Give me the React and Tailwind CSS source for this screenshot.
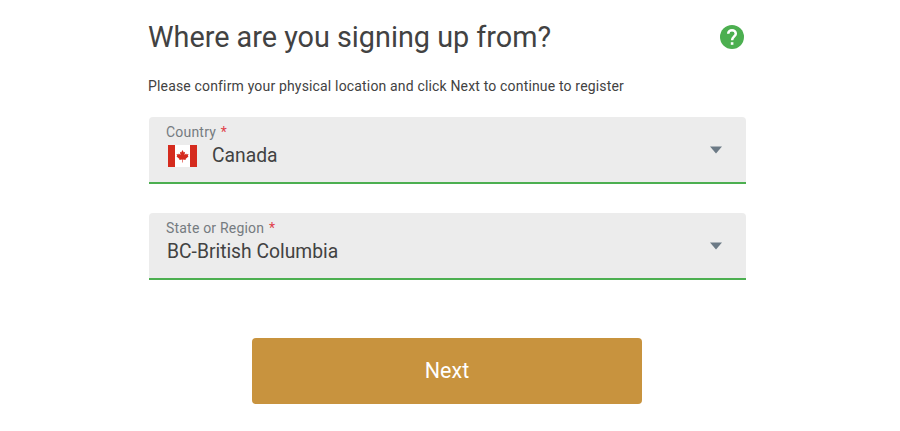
import React from "react";

function Arrow() {
  return (
    <svg className="mr-6 shrink-0" width="12" height="8" viewBox="0 0 12 8">
      <path d="M0 0.5h12L6 7.5z" fill="#6c7a86" />
    </svg>
  );
}

function CanadaFlag() {
  return (
    <svg className="ml-px mr-[15px] shrink-0" width="29" height="22" viewBox="0 0 29 22">
      <path fill="#fff" d="M0 0h29v22H0z" />
      <path fill="#d52b1e" d="M0 0h7v22H0zM22 0h7v22h-7z" />
      <path
        fill="#d52b1e"
        d="M14.5 5l-1.3 2.4-1.3-.6.6 3.3-1.7-1.7-.4 1-1.9-.3.7 2-.7.5 3 2.4-.3 1 3-.5v3h.6v-3l3 .5-.3-1 3-2.4-.7-.5.7-2-1.9.3-.4-1-1.7 1.7.6-3.3-1.3.6z"
      />
    </svg>
  );
}

function Field({ label, children }) {
  return (
    <div className="flex h-[67px] items-center justify-between rounded-t-[4px] border-b-2 border-[#4caf50] bg-[#ececec] pl-[18px]">
      <div className="h-full pt-[7px]">
        <div className="-ml-px text-[14px] leading-4 tracking-[0.2px] text-[#757b80]">
          {label} <span className="ml-px text-[#e0404a]">*</span>
        </div>
        <div className="mt-[5px] flex h-[22px] items-center text-[19.3px] leading-[22px] text-[#424242]">
          {children}
        </div>
      </div>
      <Arrow />
    </div>
  );
}

export default function App() {
  return (
    <main className="h-[431px] w-[900px] bg-white pl-[149px] pt-[20px] font-['Roboto',sans-serif]">
      <div className="w-[597px]">
        <header className="flex h-[34px] items-center justify-between">
          <h1 className="-ml-px text-[28.8px] leading-[34px] text-[#424242]">Where are you signing up from?</h1>
          <svg className="mr-[2px]" width="24" height="24" viewBox="0 0 24 24">
            <circle cx="12" cy="12" r="12" fill="#4caf50" />
            <path
              fill="none"
              stroke="#fff"
              strokeWidth="2.5"
              d="M8.2 8.8a3.8 3.6 0 0 1 7.6 0c0 2.4-3.7 3-3.7 6.5"
            />
            <path fill="#fff" d="M10.8 17.2h2.6v2.6h-2.6z" />
          </svg>
        </header>
        <p className="-ml-px mt-[24px] text-[14px] leading-4 tracking-[0.165px] text-[#424242]">
          Please confirm your physical location and click Next to continue to register
        </p>
        <div className="mt-[23px] flex flex-col gap-[29px]">
          <Field label="Country">
            <CanadaFlag />
            Canada
          </Field>
          <Field label="State or Region">BC-British Columbia</Field>
        </div>
        <button className="ml-[103px] mt-[58px] block h-[66px] w-[390px] rounded-[4px] bg-[#c8933e] text-[21.5px] text-white">
          Next
        </button>
      </div>
    </main>
  );
}
